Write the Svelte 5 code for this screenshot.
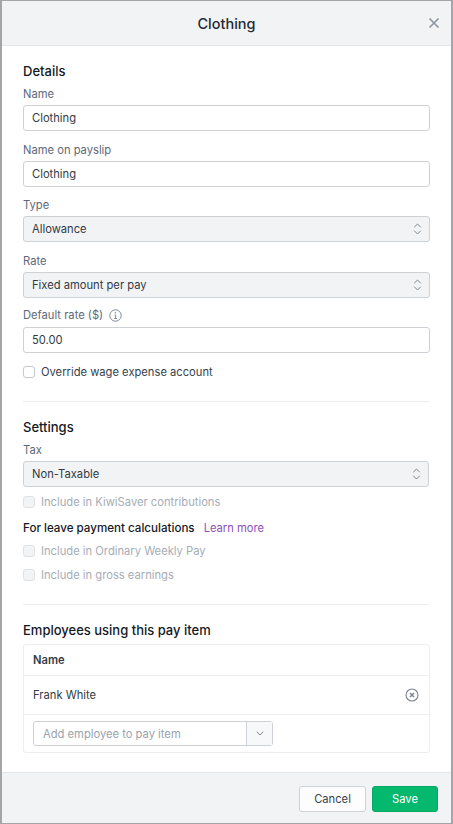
<script lang="ts">
  let name = $state('Clothing');
  let payslipName = $state('Clothing');
  let defaultRate = $state('50.00');
  let override = $state(false);
  let employees = $state(['Frank White']);
</script>

{#snippet updown()}
  <svg class="updown" width="9" height="14" viewBox="0 0 9 14" fill="none" stroke="#7c8794" stroke-width="1" stroke-linecap="round" stroke-linejoin="round" aria-hidden="true">
    <path d="M1.5 5 4.5 2l3 3"/>
    <path d="M1.5 9l3 3 3-3"/>
  </svg>
{/snippet}

<div class="modal">
  <header class="head">
    <h1>Clothing</h1>
    <button class="close" type="button" aria-label="Close">
      <svg width="12" height="12" viewBox="0 0 12 12" fill="none" stroke="#8e97a1" stroke-width="1.7" aria-hidden="true">
        <path d="M1.5 1.5l9 9M10.5 1.5l-9 9"/>
      </svg>
    </button>
  </header>

  <div class="body">
    <section class="details">
      <h2>Details</h2>
      <label class="lbl first" for="name">Name</label>
      <input id="name" class="field" bind:value={name} />
      <label class="lbl" for="payslip">Name on payslip</label>
      <input id="payslip" class="field" bind:value={payslipName} />
      <div class="lbl">Type</div>
      <div class="select">Allowance {@render updown()}</div>
      <div class="lbl">Rate</div>
      <div class="select">Fixed amount per pay {@render updown()}</div>
      <label class="lbl rate-lbl" for="rate">
        Default rate ($)
        <svg width="13" height="13" viewBox="0 0 13 13" fill="none" stroke="#7c8794" aria-hidden="true">
          <circle cx="6.5" cy="6.5" r="5.7" stroke-width="1"/>
          <path d="M5.5 6h1.1v3.4M5.3 9.5h2.6" stroke-width="1"/>
          <circle cx="6.4" cy="3.8" r=".7" fill="#7c8794" stroke="none"/>
        </svg>
      </label>
      <input id="rate" class="field" bind:value={defaultRate} />
      <label class="check override">
        <input type="checkbox" bind:checked={override} />
        <span class="box"></span>
        Override wage expense account
      </label>
    </section>

    <section class="settings">
      <h2>Settings</h2>
      <div class="lbl first">Tax</div>
      <div class="select tax">Non-Taxable {@render updown()}</div>
      <div class="check disabled kiwi"><span class="box"></span>Include in KiwiSaver contributions</div>
      <div class="leave">
        <strong>For leave payment calculations</strong>
        <a href="#learn">Learn more</a>
      </div>
      <div class="check disabled ordinary"><span class="box"></span>Include in Ordinary Weekly Pay</div>
      <div class="check disabled gross"><span class="box"></span>Include in gross earnings</div>
    </section>

    <section class="employees">
      <h2>Employees using this pay item</h2>
      <div class="table">
        <div class="thead">Name</div>
        {#each employees as emp}
          <div class="row">
            {emp}
            <svg width="14" height="14" viewBox="0 0 14 14" fill="none" stroke="#7c8794" aria-hidden="true">
              <circle cx="7" cy="7" r="6" stroke-width="1.1"/>
              <path d="M5 5l4 4M9 5 5 9" stroke-width="1.5"/>
            </svg>
          </div>
        {/each}
        <div class="add">
          <div class="combo">
            <span class="placeholder">Add employee to pay item</span>
            <span class="caret">
              <svg width="8" height="5" viewBox="0 0 8 5" fill="none" stroke="#7c8794" stroke-width="1" stroke-linecap="round" stroke-linejoin="round" aria-hidden="true">
                <path d="M1 1l3 3 3-3"/>
              </svg>
            </span>
          </div>
        </div>
      </div>
    </section>
  </div>

  <footer class="foot">
    <button class="btn" type="button">Cancel</button>
    <button class="btn save" type="button">Save</button>
  </footer>
</div>

<style>
  :global(body) {
    margin: 0;
    background: #fff;
  }

  .modal {
    box-sizing: border-box;
    width: 453px;
    height: 824px;
    display: flex;
    flex-direction: column;
    border: 1px solid #a3a5a8;
    border-left-width: 2px;
    border-right-width: 2px;
    font-family: Inter, "Liberation Sans", sans-serif;
    font-size: 11.2px;
    color: #323b45;
    background: #fff;
  }

  .head {
    flex: none;
    position: relative;
    box-sizing: border-box;
    height: 45px;
    display: flex;
    align-items: center;
    justify-content: center;
    background: #f2f3f5;
    border-bottom: 1px solid #e2e4e7;
  }

  h1 {
    margin: 0;
    font-size: 14.5px;
    font-weight: 500;
    color: #1f2933;
  }

  .close {
    position: absolute;
    right: 11px;
    top: 16px;
    padding: 0;
    border: 0;
    background: none;
    display: flex;
  }

  .body {
    flex: 1;
    min-height: 0;
    padding: 0 21px;
  }

  section {
    display: flex;
    flex-direction: column;
    align-items: stretch;
  }

  .details {
    padding-top: 17px;
    height: 356px;
    box-sizing: border-box;
    border-bottom: 1px solid #eceef0;
  }

  .settings {
    padding-top: 17px;
    height: 203px;
    box-sizing: border-box;
    border-bottom: 1px solid #eceef0;
  }

  .employees {
    padding-top: 17px;
  }

  h2 {
    margin: 0;
    font-size: 13px;
    line-height: 16px;
    font-weight: 500;
    color: #14191f;
  }

  .lbl {
    display: flex;
    align-items: center;
    gap: 6px;
    height: 14px;
    margin: 11.5px 0 4px;
    color: #5d6978;
  }

  .lbl.first {
    margin-top: 8px;
  }

  .rate-lbl {
    margin-top: 10.5px;
    margin-bottom: 5px;
  }

  .field,
  .select {
    box-sizing: border-box;
    width: 100%;
    height: 26px;
    padding: 0 8px;
    border: 1px solid #ced1d5;
    border-radius: 3px;
    font: inherit;
    color: #323b45;
    background: #fff;
    outline: none;
  }

  .select {
    display: flex;
    align-items: center;
    justify-content: space-between;
    background: #f2f3f5;
    padding-right: 7px;
  }

  .tax {
    width: 406px;
  }

  .check {
    display: flex;
    align-items: center;
    gap: 6px;
    height: 14px;
    color: #38424d;
  }

  .check input {
    display: none;
  }

  .box {
    flex: none;
    box-sizing: border-box;
    width: 12px;
    height: 12px;
    border: 1px solid #c6cacf;
    border-radius: 3px;
    background: #fff;
  }

  .override {
    margin-top: 11.5px;
  }

  .disabled {
    color: #a6adb6;
  }

  .disabled .box {
    background: #f2f3f5;
    border-color: #dfe1e4;
  }

  .kiwi {
    margin-top: 8px;
  }

  .leave {
    display: flex;
    align-items: center;
    gap: 9px;
    height: 14px;
    margin-top: 12px;
    color: #14191f;
  }

  .leave strong {
    font-size: 11.6px;
    font-weight: 500;
  }

  .leave a {
    color: #8e4fb8;
    text-decoration: none;
  }

  .ordinary {
    margin-top: 9px;
  }

  .gross {
    margin-top: 10px;
  }

  .table {
    margin-top: 6px;
    border: 1px solid #eceef0;
    border-radius: 3px;
  }

  .thead {
    height: 30px;
    padding: 0 9px;
    display: flex;
    align-items: center;
    font-weight: 600;
    border-bottom: 1px solid #eceef0;
  }

  .row {
    height: 38px;
    padding: 0 10px 0 9px;
    display: flex;
    align-items: center;
    justify-content: space-between;
    border-bottom: 1px solid #eceef0;
  }

  .add {
    padding: 6px 9px;
  }

  .combo {
    box-sizing: border-box;
    display: flex;
    width: 240px;
    height: 25px;
    border: 1px solid #ced1d5;
    border-radius: 3px;
  }

  .placeholder {
    flex: 1;
    padding: 0 9px;
    line-height: 24px;
    color: #9aa2ac;
  }

  .caret {
    box-sizing: border-box;
    width: 26px;
    display: flex;
    align-items: center;
    justify-content: center;
    background: #f7f8f9;
    border-left: 1px solid #ced1d5;
  }

  .foot {
    flex: none;
    box-sizing: border-box;
    height: 51px;
    padding: 13px 13px 0 0;
    display: flex;
    justify-content: flex-end;
    gap: 6px;
    background: #f2f3f5;
    border-top: 1px solid #e2e4e7;
  }

  .btn {
    box-sizing: border-box;
    width: 67px;
    height: 25.5px;
    padding: 0;
    border: 1px solid #ced1d5;
    border-radius: 3px;
    font: inherit;
    color: #38424d;
    background: #fdfdfd;
  }

  .save {
    width: 66px;
    border-color: #04a864;
    color: #fff;
    background: #04b86d;
  }
</style>
